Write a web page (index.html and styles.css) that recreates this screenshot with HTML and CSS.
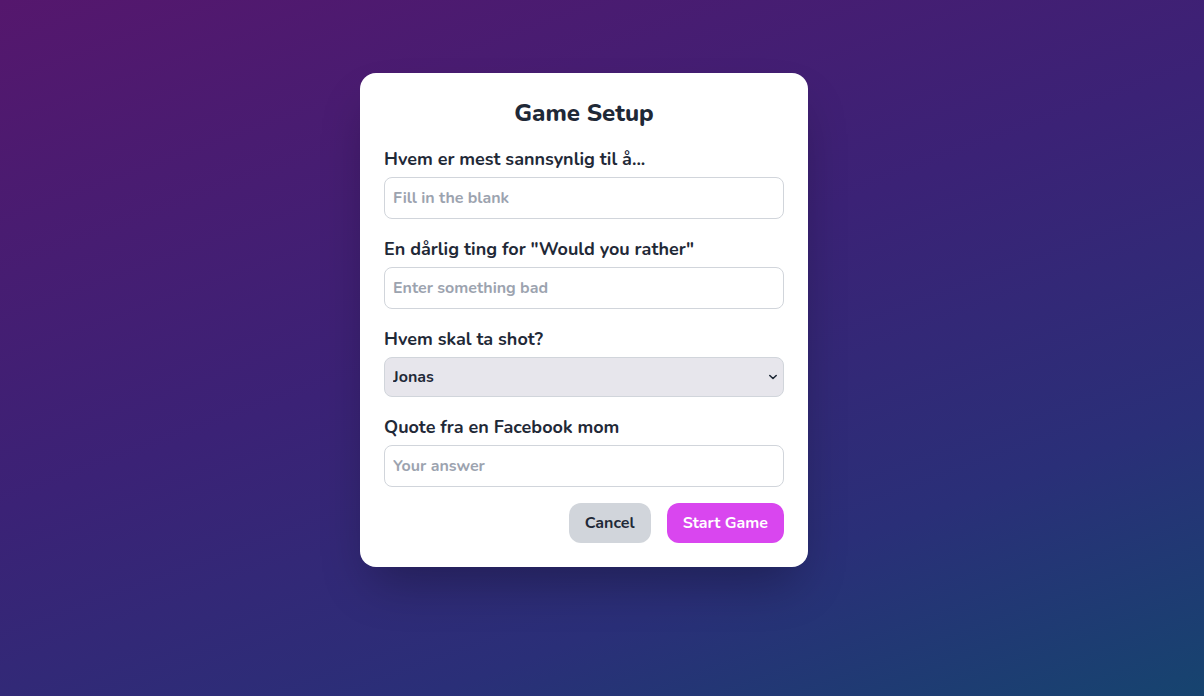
FILE: index.html
```html
<!DOCTYPE html>
<html lang="no">
<head>
<meta charset="utf-8">
<title>Game Setup</title>
<link rel="stylesheet" href="styles.css">
</head>
<body>
<main class="screen">
  <form class="card">
    <h1 class="title">Game Setup</h1>
    <div class="field">
      <label class="label" for="q1">Hvem er mest sannsynlig til å...</label>
      <input class="input" id="q1" type="text" placeholder="Fill in the blank">
    </div>
    <div class="field">
      <label class="label" for="q2">En dårlig ting for "Would you rather"</label>
      <input class="input" id="q2" type="text" placeholder="Enter something bad">
    </div>
    <div class="field">
      <label class="label" for="q3">Hvem skal ta shot?</label>
      <div class="select-wrap">
        <select class="select" id="q3">
          <option>Jonas</option>
        </select>
        <svg class="chevron" width="10" height="6" viewBox="0 0 10 6" aria-hidden="true">
          <path d="M1.8 1.5 L5 4.5 L8.2 1.5" fill="none" stroke="#1f2937" stroke-width="1.6" stroke-linecap="round" stroke-linejoin="round"/>
        </svg>
      </div>
    </div>
    <div class="field">
      <label class="label" for="q4">Quote fra en Facebook mom</label>
      <input class="input" id="q4" type="text" placeholder="Your answer">
    </div>
    <div class="actions">
      <button type="button" class="btn btn-cancel">Cancel</button>
      <button type="button" class="btn btn-start">Start Game</button>
    </div>
  </form>
</main>
</body>
</html>
```

FILE: styles.css
```css
* { box-sizing: border-box; }
html, body { margin: 0; height: 100%; }
body {
  font-family: "Nunito", "Lato", "Noto Sans", sans-serif;
  color: #1f2937;
}
.screen {
  min-height: 696px;
  background: linear-gradient(160deg, #55176d 0%, #3b2276 45%, #2a2f78 75%, #16446f 100%);
  display: flex;
  justify-content: center;
  align-items: flex-start;
  padding-top: 73px;
  padding-right: 36px;
}
.card {
  width: 448px;
  background: #ffffff;
  border-radius: 16px;
  padding: 24px;
  box-shadow: 0 25px 50px -12px rgba(0, 0, 0, 0.3);
  display: flex;
  flex-direction: column;
  gap: 16px;
}
.title {
  margin: 0;
  font-size: 24px;
  line-height: 32px;
  font-weight: 800;
  text-align: center;
  color: #1f2937;
}
.field {
  display: flex;
  flex-direction: column;
  gap: 4px;
}
.label {
  font-size: 18px;
  line-height: 28px;
  font-weight: 700;
  color: #1f2937;
}
.input, .select {
  font-family: inherit;
  font-size: 16px;
  line-height: 24px;
  font-weight: 700;
  color: #1f2937;
  border: 1px solid #d1d5db;
  border-radius: 8px;
  padding: 7px 8px;
  width: 100%;
  outline: none;
}
.input { background: #ffffff; height: 42px; }
.input::placeholder { color: #9ca3af; opacity: 1; }
.select-wrap { position: relative; }
.select {
  appearance: none;
  -webkit-appearance: none;
  background-color: #e7e6ec;
  height: 40px;
  padding-right: 28px;
}
.chevron {
  position: absolute;
  right: 6px;
  top: 17px;
  pointer-events: none;
}
.actions {
  display: flex;
  justify-content: flex-end;
  gap: 16px;
}
.btn {
  font-family: inherit;
  font-size: 16px;
  line-height: 24px;
  font-weight: 700;
  border: none;
  border-radius: 12px;
  padding: 8px 16px;
  height: 40px;
  cursor: pointer;
}
.btn-cancel { background: #d1d5db; color: #1f2937; }
.btn-start { background: #d946ef; color: #ffffff; }
```
